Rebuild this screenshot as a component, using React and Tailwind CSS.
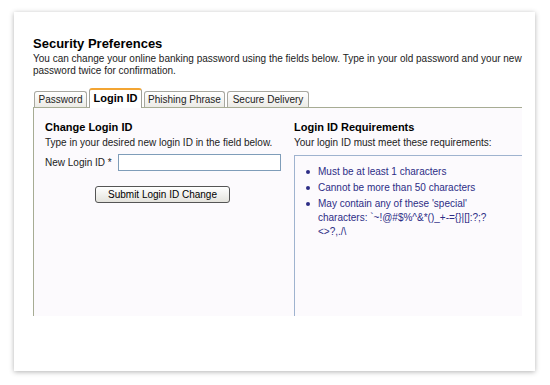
import React from "react";

const tabs = [
  { label: "Password", w: "w-[53px]" },
  { label: "Login ID", w: "w-[53px]" },
  { label: "Phishing Phrase", w: "w-[81px]" },
  { label: "Secure Delivery", w: "w-[82px]" },
];

function Bullet({ children }) {
  return (
    <li className="flex leading-[14px]">
      <span className="w-[12px] shrink-0 flex pt-[5px]">
        <span className="w-[4px] h-[4px] rounded-full bg-[#2d2d86]" />
      </span>
      <span>{children}</span>
    </li>
  );
}

export default function App() {
  return (
    <div className="w-[550px] h-[385px] bg-white font-['Liberation_Sans',Arial,sans-serif] text-[10px] text-[#222] pt-[12px] pl-[14px]">
      <div className="w-[521px] h-[359px] bg-white shadow-[0_1px_5px_rgba(0,0,0,0.3)] pl-[19px] pt-[24px]">
        <h1 className="text-[13px] font-bold leading-[16px] text-black mb-[1px]">Security Preferences</h1>
        <p className="leading-[12px] w-[495px]">
          You can change your online banking password using the fields below. Type in your old password and your new
          password twice for confirmation.
        </p>

        <div className="mt-[11px] flex items-end pl-[1px] gap-[2px] h-[19px]">
          {tabs.map((t) =>
            t.label === "Login ID" ? (
              <div
                key={t.label}
                className={`h-[20px] ${t.w} text-center border border-b-0 border-[#a0a098] border-t-2 border-t-[#f3a533] rounded-t-[3px] bg-white font-bold text-[11px] leading-[16px] text-black -mb-px relative z-10`}
              >
                {t.label}
              </div>
            ) : (
              <div
                key={t.label}
                className={`h-[16px] ${t.w} text-center border border-b-0 border-[#a8a8a0] rounded-t-[3px] bg-gradient-to-b from-white to-[#ecebe6] leading-[15px] text-[#222]`}
              >
                {t.label}
              </div>
            )
          )}
        </div>

        <div className="w-[489px] h-[209px] border-t border-l border-[#a7ac94] bg-[#fcfafd] flex">
          <div className="w-[260px] pl-[11px] pt-[12px]">
            <h2 className="font-bold text-[11px] leading-[14px] text-black">Change Login ID</h2>
            <p className="leading-[14px] mt-[2px]">Type in your desired new login ID in the field below.</p>
            <div className="flex items-center mt-[4px]">
              <span className="w-[73px]">New Login ID *</span>
              <input className="w-[163px] h-[17px] border border-[#7f9db9] bg-white" />
            </div>
            <button className="block mt-[15px] ml-[50px] w-[135px] h-[17px] border border-[#555] rounded-[3px] bg-gradient-to-b from-white to-[#e4e3dd] text-[10px] leading-[15px] text-black">
              Submit Login ID Change
            </button>
          </div>

          <div className="flex-1 flex flex-col pt-[12px]">
            <h2 className="font-bold text-[11px] leading-[14px] text-black">Login ID Requirements</h2>
            <p className="leading-[14px] mt-[2px]">Your login ID must meet these requirements:</p>
            <div className="mt-[5px] flex-1 border-t border-l border-[#9fb3cf] bg-[#fcfafd] pt-[9px] pl-[11px] pr-[10px]">
              <ul className="text-[#2d2d86] flex flex-col gap-[2px]">
                <Bullet>Must be at least 1 characters</Bullet>
                <Bullet>Cannot be more than 50 characters</Bullet>
                <Bullet>
                  May contain any of these 'special'
                  <br />
                  characters: `~!@#$%^&amp;*()_+-={"{}"}|[]:?;?
                  <br />
                  &lt;&gt;?,./\
                </Bullet>
              </ul>
            </div>
          </div>
        </div>
      </div>
    </div>
  );
}
